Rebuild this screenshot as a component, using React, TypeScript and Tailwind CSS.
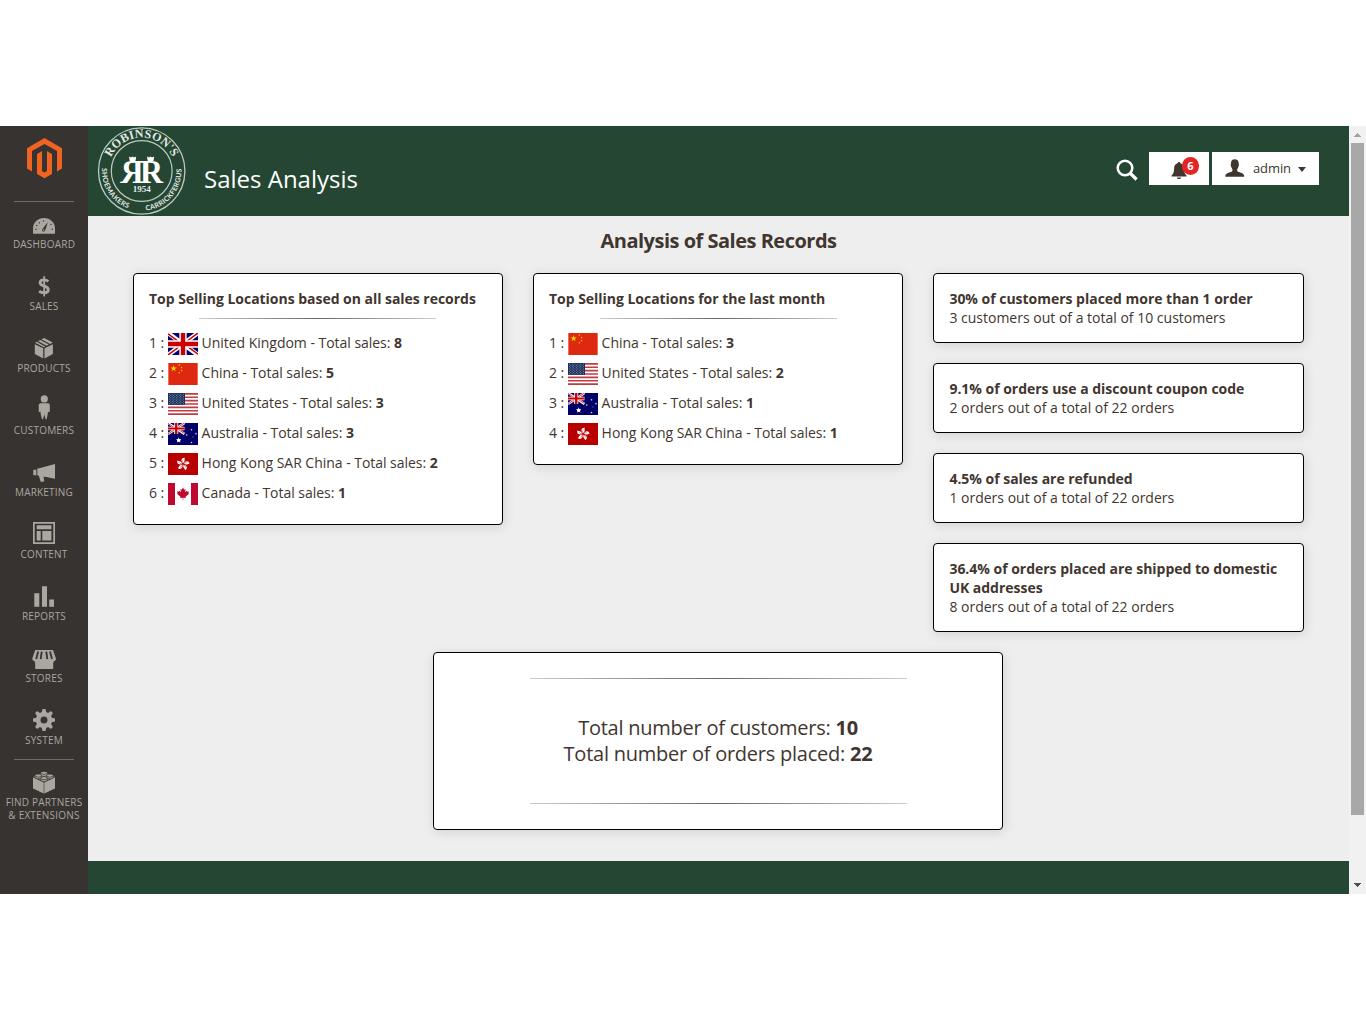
import React from "react";

type GlyphProps = { children: React.ReactNode; dy?: number };

/* 28x26 drawing area shared by all the sidebar glyphs; dy seats a glyph above its label */
function Glyph({ children, dy = 0 }: GlyphProps) {
  return (
    <svg width="28" height="26" viewBox="0 0 28 26" fill="#aaa6a0" className="block overflow-visible">
      <g transform={`translate(0 ${dy})`}>{children}</g>
    </svg>
  );
}

const icons: Record<string, React.ReactNode> = {
  dashboard: (
    <Glyph dy={1}>
      <path d="M3 20.700V15.500C3 9.500 8 5 14 5s11 4.500 11 10.500v5.200z" />
      <g fill="#373330">
        <path d="M17.800 9l-5.400 7.200c-.8 1.300.1 2.500 1.200 2.400.9 0 1.400-.6 1.700-1.400z" />
        <circle cx="5.800" cy="16.200" r=".7" />
        <circle cx="6.700" cy="12.500" r=".7" />
        <circle cx="9.300" cy="9.700" r=".7" />
        <circle cx="13.500" cy="8" r=".7" />
        <circle cx="21" cy="11.500" r=".7" />
        <circle cx="22.300" cy="16.200" r=".7" />
      </g>
      <circle cx="13.700" cy="17" r=".8" />
    </Glyph>
  ),
  sales: (
    <Glyph dy={-1}>
      <g fill="none" stroke="#aaa6a0">
        <path d="M18.300 8.300c-1.300-1-2.700-1.400-4.300-1.400-2.500 0-3.900 1-3.900 2.900 0 4.300 8.200 2.300 8.200 6.700 0 2-1.600 3.300-4.200 3.300-2 0-3.700-.6-5-1.500" strokeWidth="2.900" />
        <path d="M14.200 3.200v20.200" strokeWidth="1.800" />
      </g>
    </Glyph>
  ),
  products: (
    <Glyph dy={-1}>
      <path d="M13.200 13.300v10.200L4.800 19V9.200zM14.500 13.300l8.400-4.100V19l-8.400 4.500z" />
      <path d="M14.200 3l8.500 4.600-2.700 1.300-8.500-4.700zM10.400 4.900l8.400 4.700-2.300 1.200-8.600-4.700zM6.700 6.800l8.500 4.700-1.300.7-8.800-4.400z" />
    </Glyph>
  ),
  customers: (
    <Glyph dy={-2.8}>
      <circle cx="14.300" cy="3.700" r="3.600" />
      <path d="M10.500 8h7.700c1 .3 1.600 1 1.600 2v6c0 1-1.400 1.200-1.700.2l-.5 3.300-1 4.500h-1l-1.300-4.800L13 24h-1l-1.200-4.500-.4-3.300c-.3 1-1.700.8-1.700-.2v-6c0-1 .700-1.700 1.800-2z" />
    </Glyph>
  ),
  marketing: (
    <Glyph dy={-1}>
      <path d="M3.300 11l3-.5v5.900l-3-.5zM7.300 9.800L25 5v14.700l-11.500-2.300.8 4.900-3.500.8-2-6.300-1.500-.5z" />
    </Glyph>
  ),
  content: (
    <Glyph dy={-2}>
      <path fillRule="evenodd" d="M3 2h22v22H3zm1.700 1.700v18.600h18.600V3.700z" />
      <path d="M6.700 5.300h14.700v4H6.700zM6.700 11h4v9.500h-4zM12.300 11h9.100v9.500h-9.100z" />
    </Glyph>
  ),
  reports: (
    <Glyph dy={-1.7}>
      <path d="M4.300 11h5v13.500h-5zM12 4h5v20.500h-5zM19.200 17.300h4.800v7.200h-4.800z" />
    </Glyph>
  ),
  stores: (
    <Glyph dy={-0.4}>
      <path d="M5.200 4.500h17.800l3 8.600c0 2-2 2.700-2.800 2.200v8.200H5.200v-8.200c-1.800.2-3-1-3-2.200z" />
      <path d="M8.200 6l-2 7.500M11.700 6l-1 7.500M16.300 6l1 7.500M20 6l2 7.500" stroke="#373330" strokeWidth="1.800" fill="none" />
      <path d="M4.500 14.200c2 1.500 4 0 4.500-1 1 1.500 3.600 1.500 5 0 1.400 1.500 4 1.500 5.200 0 1 1.500 3 2 4.500 1V17h-19z" />
    </Glyph>
  ),
  system: (
    <Glyph dy={-2}>
      <path
        fillRule="evenodd"
        d="M12.600 3h2.900l.7 3.100 1.900.8 2.800-1.800 2 2-1.800 2.800.8 1.900 3.100.8v2.900l-3.100.7-.8 1.900 1.800 2.800-2 2-2.800-1.800-1.900.8-.700 3.100h-2.900l-.8-3.100-1.900-.8-2.800 1.800-2-2 1.800-2.800-.8-1.900-3.100-.7v-2.900l3.100-.8.8-1.900-1.800-2.800 2-2 2.800 1.800 1.900-.8zM14 10.500a3.500 3.500 0 1 0 0 7 3.500 3.500 0 0 0 0-7z"
      />
    </Glyph>
  ),
  partners: (
    <Glyph dy={-1}>
      <path d="M3 8.300l10.700 5.300v11L3 19.500zM25 8.300v11.200l-10.700 5.100v-11z" />
      <path d="M14 3.500l10.300 4-10.300 5-10.300-5z" />
      <g stroke="#373330" strokeWidth=".7">
        <path d="M10.800 3.800v2c0 2 6.600 2 6.600 0v-2z" />
        <ellipse cx="14.100" cy="3.900" rx="3.300" ry="1.500" />
        <path d="M5 6.500v1.800c0 2 6.400 2 6.400 0V6.500z" />
        <ellipse cx="8.200" cy="6.600" rx="3.200" ry="1.500" />
        <path d="M16.800 6.500v1.800c0 2 6.400 2 6.400 0V6.500z" />
        <ellipse cx="20" cy="6.600" rx="3.200" ry="1.500" />
        <path d="M10.800 9.200V11c0 2 6.600 2 6.600 0V9.200z" />
        <ellipse cx="14.100" cy="9.200" rx="3.300" ry="1.500" />
      </g>
    </Glyph>
  ),
};

const menu = [
  { icon: "dashboard", label: "DASHBOARD" },
  { icon: "sales", label: "SALES" },
  { icon: "products", label: "PRODUCTS" },
  { icon: "customers", label: "CUSTOMERS" },
  { icon: "marketing", label: "MARKETING" },
  { icon: "content", label: "CONTENT" },
  { icon: "reports", label: "REPORTS" },
  { icon: "stores", label: "STORES" },
  { icon: "system", label: "SYSTEM" },
];

function MagentoMark() {
  return (
    <svg width="35" height="41" viewBox="0 0 35 41" fill="#f06321" className="block">
      <path d="M17.500 0L35 10.200v20.300l-5 2.900V13.100L17.500 5.900 5 13.100v20.300l-5-2.900V10.200z" />
      <path d="M10 16l5-2.900v19.800l2.500 1.500 2.500-1.500V13.100l5 2.900v19.900l-7.500 4.400-7.500-4.400z" />
    </svg>
  );
}

function Sidebar() {
  return (
    <nav className="flex w-[88px] shrink-0 flex-col items-center bg-[#373330] text-center text-[10px] leading-[13px] tracking-[0.2px] text-[#aaa6a0]">
      <div className="flex h-[76px] w-[60px] justify-center border-b border-[#736963] pt-[12px] pl-[1px]">
        <MagentoMark />
      </div>
      <ul className="mt-[9px] flex flex-col">
        {menu.map((m) => (
          <li key={m.label} className="flex h-[62px] flex-col items-center pt-[1px]">
            {icons[m.icon]}
            <span>{m.label}</span>
          </li>
        ))}
      </ul>
      <div className="-mt-[10px] flex w-[88px] flex-col items-center">
        <span className="h-px w-[60px] bg-[#736963]" />
        <span className="mt-[10px]">{icons.partners}</span>
        <span>FIND PARTNERS<br />&amp; EXTENSIONS</span>
      </div>
    </nav>
  );
}

function BrandSeal() {
  return (
    <svg width="90" height="90" viewBox="0 0 90 90" className="block shrink-0" fill="#e3eae5">
      <defs>
        <path id="arc-top" d="M11.200 45a33.500 33.500 0 0 1 67 0" />
        <path id="arc-bottom" d="M5.200 41a39.700 39.700 0 1 0 79 0" />
      </defs>
      <circle cx="44.700" cy="45" r="43.200" fill="none" stroke="#bccbc2" strokeWidth="1.300" />
      <circle cx="44.700" cy="45" r="30.400" fill="none" stroke="#bccbc2" strokeWidth="1.200" />
      <text fontFamily="Liberation Serif, serif" fontSize="12" fontWeight="700" textAnchor="middle" letterSpacing=".3">
        <textPath href="#arc-top" startOffset="50%">ROBINSON&apos;S</textPath>
      </text>
      <text fontFamily="Lato, sans-serif" fontSize="7" fontWeight="700" letterSpacing=".4">
        <textPath href="#arc-bottom" startOffset="1">SHOEMAKERS</textPath>
      </text>
      <text fontFamily="Lato, sans-serif" fontSize="7" fontWeight="700" textAnchor="end" letterSpacing=".3">
        <textPath href="#arc-bottom" startOffset="131">CARRICKFERGUS</textPath>
      </text>
      <g fill="#fff" fontFamily="Liberation Serif, serif" fontSize="34" fontWeight="700">
        <text x="0" y="56.500" textLength="23" lengthAdjust="spacingAndGlyphs" transform="translate(46.500 0) scale(-1 1)">R</text>
        <text x="43" y="56.500" textLength="23" lengthAdjust="spacingAndGlyphs">R</text>
      </g>
      <path fill="#fff" d="M32 30.500l2 1 1.500-1 1.500 1 2.200-1-.8 5h-5.600zM50 30.500l2 1 1.500-1 1.500 1 2.200-1-.8 5h-5.600z" />
      <text x="44.700" y="66" fontFamily="Liberation Serif, serif" fontSize="9" fontWeight="700" textAnchor="middle">1954</text>
    </svg>
  );
}

function Header() {
  return (
    <header className="flex h-[90px] items-start bg-[#254633] pr-[30px] pl-[9px]">
      <BrandSeal />
      <h1 className="mt-[36px] ml-[17px] text-[24px] leading-[34px] text-white">Sales Analysis</h1>
      <div className="mt-[26px] ml-auto flex">
        <svg width="22" height="22" viewBox="0 0 22 22" className="mt-[7px] mr-[11px]" fill="none" stroke="#fff">
          <circle cx="9" cy="9" r="7.300" strokeWidth="2.500" />
          <path d="M14 14l6.600 6.500" strokeWidth="3.200" />
        </svg>
        <div className="relative mr-[3px] h-[33px] w-[60px] bg-white">
          <svg width="16" height="18" viewBox="0 0 16 18" className="mt-[10px] ml-[22px]" fill="#41362f">
            <path d="M8 0c.9 0 1.300.6 1.400 1.300C12 2 12.900 4.200 12.900 6.500c0 3.500.8 5.500 2.600 7v1H.5v-1c1.800-1.500 2.600-3.500 2.600-7C3.100 4.200 4 2 6.600 1.300 6.700.6 7.100 0 8 0zM5.900 15.500h4.200C9.800 17.500 6.200 17.500 5.900 15.500z" />
          </svg>
          <span className="absolute top-[5px] left-[33px] flex h-[18px] w-[17px] items-center justify-center rounded-full bg-[#e22626] pb-[1px] text-[11px] leading-none font-bold text-white">6</span>
        </div>
        <div className="flex h-[33px] w-[107px] items-center bg-white pl-[13px] text-[13px] text-[#41362f]">
          <svg width="20" height="18" viewBox="0 0 20 18" className="-mt-[1px]" fill="#41362f">
            <path d="M9.700.2c2.500 0 4 1.500 4 4 0 1.200.3 1 .2 2.200-.2 1-.6 1.200-.8 2-.3 1-.8 1.500-1 2.300 0 1.200.3 1.600 1 2 2.500 1 6.200 1.200 6.200 5.100H.3c0-3.900 3.700-4.100 6.200-5.100.7-.4 1-.8 1-2-.2-.8-.7-1.300-1-2.300-.2-.8-.6-1-.8-2C5.600 5.200 6 5.400 6 4.200c0-2.500 1.200-4 3.700-4z" />
          </svg>
          <span className="ml-[8px] tracking-[-0.1px]">admin</span>
          <svg width="8" height="5" viewBox="0 0 8 5" className="mt-[2px] ml-[7px]" fill="#41362f"><path d="M0 0h8L4 5z" /></svg>
        </div>
      </div>
    </header>
  );
}

const STAR = "M0-1L.225-.309.951-.309.363.118.588.809 0 .382-.588.809-.363.118-.951-.309-.225-.309z";

function UnionJack() {
  return (
    <>
      <path fill="#006" d="M0 0h30v22H0z" />
      <path stroke="#fff" strokeWidth="4.400" d="M0 0l30 22M30 0L0 22" />
      <path stroke="#c00" strokeWidth="1.500" d="M0 .8l15 11M30 21.200L15 10.200M30 0L15 11M0 22l15-11" />
      <path stroke="#fff" strokeWidth="7.300" d="M15 0v22M0 11h30" />
      <path stroke="#c00" strokeWidth="4.400" d="M15 0v22M0 11h30" />
    </>
  );
}

const stars = (list: number[][], fill: string) =>
  list.map(([x, y, r], i) => <path key={i} fill={fill} d={STAR} transform={`translate(${x} ${y}) scale(${r})`} />);

const flags: Record<string, React.ReactNode> = {
  "United Kingdom": <UnionJack />,
  China: (
    <>
      <path fill="#f08070" d="M0 0h30v22H0z" />
      <path fill="#de2910" d="M.800 0h28.400v22H.800z" />
      {stars([[5.600, 5.500, 3.300], [11.300, 2.200, 1.100], [13.600, 4.500, 1.100], [13.600, 7.600, 1.100], [11.300, 9.900, 1.100]], "#ffde00")}
    </>
  ),
  "United States": (
    <>
      <path fill="#fff" d="M0 0h30v22H0z" />
      <path stroke="#bd3d44" strokeWidth="1.690" d="M0 .85h30M0 4.230h30M0 7.620h30M0 11h30M0 14.380h30M0 17.770h30M0 21.150h30" />
      <path fill="#192f5d" d="M0 0h17v11.850H0z" />
      <path stroke="#fff" strokeOpacity=".65" strokeWidth=".8" strokeDasharray=".8 2" d="M1 1.200h15.500M1 3.600h15.500M1 6h15.500M1 8.400h15.500M1 10.700h15.500" />
      <path stroke="#fff" strokeOpacity=".65" strokeWidth=".8" strokeDasharray=".8 2" d="M2.400 2.400h13.500M2.400 4.800h13.500M2.400 7.200h13.500M2.400 9.600h13.500" />
    </>
  ),
  Australia: (
    <>
      <path fill="#006" d="M0 0h30v22H0z" />
      <g transform="scale(.55 .5)"><UnionJack /></g>
      {stars([[10.700, 17.200, 3], [23.500, 6.800, 1.200], [18.700, 12, 1.200], [28, 10.700, 1.200], [25, 14, .7], [23.500, 19.600, 1.200]], "#fff")}
      <circle cx="10.700" cy="17.200" r="1.500" fill="#fff" />
    </>
  ),
  "Hong Kong SAR China": (
    <>
      <path fill="#b80000" d="M0 0h30v22H0z" />
      {[8, 80, 152, 224, 296].map((a) => (
        <g key={a} transform={`translate(15 11) rotate(${a})`}>
          <path fill="#fff" d="M0-.8C-3-2.500-2.500-6.500 1-6.500 0-5 2.500-4 0-.8z" />
          <path stroke="#b80000" strokeWidth=".4" fill="none" d="M0-1C-1.200-2.500-.8-3.500-.3-4.200" />
        </g>
      ))}
    </>
  ),
  Canada: (
    <>
      <path fill="#fff" d="M0 0h30v22H0z" />
      <path fill="#bf0a30" d="M0 0h7v22H0zM23 0h7v22h-7z" />
      <path fill="#bf0a30" d="M15 4.500l1.200 2.200 1.400-.7-.6 3.200 1.700-1.500.4.900 1.900-.2-.7 1.900.8.5-3.600 3 .3 1.300-2.600-.4.100 2.500h-.600l.1-2.500-2.600.4.3-1.300-3.600-3 .8-.5-.7-1.900 1.900.2.400-.9 1.700 1.500-.600-3.200 1.400.7z" />
    </>
  ),
};

const card = "rounded-[4px] border border-black bg-white shadow-[1px_2px_12px_0_rgba(0,0,0,0.12)]";

function Rule({ className }: { className: string }) {
  return <div className={`h-px bg-[linear-gradient(to_right,#ccc,#666_50%,#ccc)] ${className}`} />;
}

function LocationCard({ title, rows, rule }: { title: string; rows: [string, number][]; rule: string }) {
  return (
    <section className={`${card} w-[370px] px-[15px] pt-[15px] pb-[16px]`}>
      <h3 className="font-bold tracking-[-0.03px]">{title}</h3>
      <Rule className={`mt-[10px] w-[237px] ${rule}`} />
      <ol className="mt-[9px]">
        {rows.map(([name, n], i) => (
          <li key={name} className="flex h-[30px] items-start pt-[5px] tracking-[-0.03px]">
            <span className="w-[19px]">{i + 1} :</span>
            <svg width="30" height="22" viewBox="0 0 30 22" className="mr-[3.600px] overflow-hidden">{flags[name]}</svg>
            <span>{name} - Total sales: <b>{n}</b></span>
          </li>
        ))}
      </ol>
    </section>
  );
}

const facts: [string, string][] = [
  ["30% of customers placed more than 1 order", "3 customers out of a total of 10 customers"],
  ["9.1% of orders use a discount coupon code", "2 orders out of a total of 22 orders"],
  ["4.5% of sales are refunded", "1 orders out of a total of 22 orders"],
  ["36.4% of orders placed are shipped to domestic UK addresses", "8 orders out of a total of 22 orders"],
];

function Scrollbar() {
  return (
    <div className="flex w-[17px] shrink-0 flex-col items-center bg-[#f1f1f1]">
      <svg width="7" height="4" viewBox="0 0 7 4" className="mt-[7px]" fill="#a3a3a3"><path d="M3 0h1v1h1v1h1v1h1v1H0V3h1V2h1V1h1z" /></svg>
      <div className="mt-[6px] h-[672px] w-[13px] bg-[#a8a8a8]" />
      <svg width="7" height="4" viewBox="0 0 7 4" className="mt-auto mb-[7px]" fill="#505050"><path d="M0 0h7v1H6v1H5v1H4v1H3V3H2V2H1V1H0z" /></svg>
    </div>
  );
}

export default function App() {
  return (
    <div className="h-[1020px] w-[1366px] bg-white py-[126px] font-['Open_Sans',sans-serif] text-[14px] leading-[19px] text-[#41362f]">
      <div className="flex h-[768px]">
        <Sidebar />
        <div className="flex min-w-0 flex-1 flex-col bg-[#eee]">
          <Header />
          <main className="flex flex-1 flex-col">
            <h2 className="mt-[11px] text-center text-[20px] leading-[28px] font-bold tracking-[-0.5px]">Analysis of Sales Records</h2>
            <div className="mt-[18px] ml-[45px] flex items-start gap-[30px]">
              <LocationCard
                title="Top Selling Locations based on all sales records"
                rule="ml-[50px]"
                rows={[["United Kingdom", 8], ["China", 5], ["United States", 3], ["Australia", 3], ["Hong Kong SAR China", 2], ["Canada", 1]]}
              />
              <LocationCard
                title="Top Selling Locations for the last month"
                rule="ml-[51px]"
                rows={[["China", 3], ["United States", 2], ["Australia", 1], ["Hong Kong SAR China", 1]]}
              />
              <div className="flex w-[371px] flex-col gap-[20px]">
                {facts.map(([a, b]) => (
                  <section key={a} className={`${card} p-[15px] pl-[15.400px]`}>
                    <p className="font-bold tracking-[-0.02px]">{a}</p>
                    <p>{b}</p>
                  </section>
                ))}
              </div>
            </div>
            <section className={`${card} mt-[20px] ml-[345px] flex h-[178px] w-[570px] flex-col items-center pt-[25px] text-[20px] leading-[26px] tracking-[-0.24px]`}>
              <Rule className="w-[377px]" />
              <p className="mt-[36px]">Total number of customers: <b>10</b></p>
              <p className="mb-[36px]">Total number of orders placed: <b>22</b></p>
              <Rule className="w-[377px]" />
            </section>
          </main>
          <footer className="h-[33px] bg-[#254633]" />
        </div>
        <Scrollbar />
      </div>
    </div>
  );
}
